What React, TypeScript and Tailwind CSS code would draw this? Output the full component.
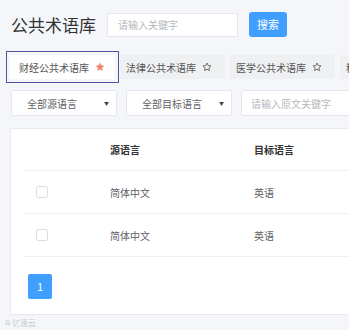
import React from "react";

const tabs = ["财经公共术语库", "法律公共术语库", "医学公共术语库", "科技公共术语库"];

const rows = [
  { src: "简体中文", tgt: "英语" },
  { src: "简体中文", tgt: "英语" },
];

function Star({ filled }: { filled?: boolean }) {
  return (
    <svg viewBox="0 0 24 24" className="h-[10px] w-[10px] shrink-0">
      <path
        d="M12 2.5l2.9 6.1 6.6.8-4.9 4.6 1.3 6.6L12 17.3l-5.9 3.3 1.3-6.6-4.9-4.6 6.6-.8z"
        fill={filled ? "#f4846c" : "none"}
        stroke={filled ? "#f4846c" : "#555"}
        strokeWidth={filled ? 1 : 2}
        strokeLinejoin="round"
      />
    </svg>
  );
}

export default function App() {
  return (
    <div className="h-[330px] w-[349px] overflow-hidden bg-[#f4f6f9] font-['Noto_Sans_CJK_SC',sans-serif] text-[#606266]">
      {/* header */}
      <div className="flex items-center pl-[11px] pt-[12px]">
        <h1 className="text-[17px] leading-[25px] text-[#333]">公共术语库</h1>
        <div className="ml-[11px] flex h-[24px] w-[131px] items-center border border-[#e4e7ed] bg-white pl-[10px] text-[10px] text-[#b4b7bd]">
          请输入关键字
        </div>
        <button className="ml-[11px] h-[25px] w-[38px] rounded-[3px] bg-[#409eff] text-[11px] text-white">
          搜索
        </button>
      </div>

      {/* tabs */}
      <div className="mt-[18px] flex gap-[5px] pl-[10px] whitespace-nowrap">
        {tabs.map((t, i) => (
          <div
            key={t}
            className={
              i === 0
                ? "flex h-[24px] w-[105px] shrink-0 items-center gap-[6px] bg-white pl-[9px] text-[10px] text-[#555] outline outline-1 outline-offset-[3px] outline-[#4f53a1]"
                : "flex h-[24px] w-[105px] shrink-0 items-center gap-[6px] bg-[#eff0f2] pl-[6px] text-[10px] text-[#555]"
            }
          >
            <span>{t}</span>
            <Star filled={i === 0} />
          </div>
        ))}
      </div>

      {/* filters */}
      <div className="mt-[11px] flex gap-[9px] pl-[11px] whitespace-nowrap">
        {["全部源语言", "全部目标语言"].map((s) => (
          <div
            key={s}
            className="flex h-[26px] w-[106px] shrink-0 items-center justify-between rounded-[2px] border border-[#e4e7ed] bg-white pl-[15px] pr-[7px] text-[10px] text-[#606266]"
          >
            <span>{s}</span>
            <span className="text-[5px] text-[#444]">▼</span>
          </div>
        ))}
        <div className="flex h-[26px] w-[120px] shrink-0 items-center rounded-[2px] border border-[#e4e7ed] bg-white pl-[9px] text-[10px] text-[#b4b7bd]">
          请输入原文关键字
        </div>
      </div>

      {/* table card */}
      <div className="ml-[10px] mt-[12px] w-[360px] border border-[#e8eaee] bg-white px-[13px] pb-[15px]">
        <div className="flex h-[42px] items-center border-b border-[#eef0f3] text-[10px] font-bold text-[#333]">
          <div className="w-[86px]" />
          <div className="w-[144px]">源语言</div>
          <div>目标语言</div>
        </div>
        {rows.map((r, i) => (
          <div
            key={i}
            className="flex h-[43px] items-center border-b border-[#eef0f3] text-[10px] text-[#606266]"
          >
            <div className="w-[86px] pl-[12px]">
              <div className="h-[12px] w-[12px] rounded-[2px] border border-[#dcdfe6] bg-white" />
            </div>
            <div className="w-[144px]">{r.src}</div>
            <div>{r.tgt}</div>
          </div>
        ))}
        <div className="mt-[17px] pl-[4px]">
          <div className="flex h-[25px] w-[24px] items-center justify-center rounded-[2px] bg-[#409eff] text-[11px] text-white">
            1
          </div>
        </div>
      </div>

      {/* watermark */}
      <div className="mt-[3px] flex items-center gap-[2px] pl-[5px] text-[8px] leading-[9px] text-[#c9cbd0]">
        <span className="text-[7px]">⧉</span>
        <span>亿速云</span>
      </div>
    </div>
  );
}
